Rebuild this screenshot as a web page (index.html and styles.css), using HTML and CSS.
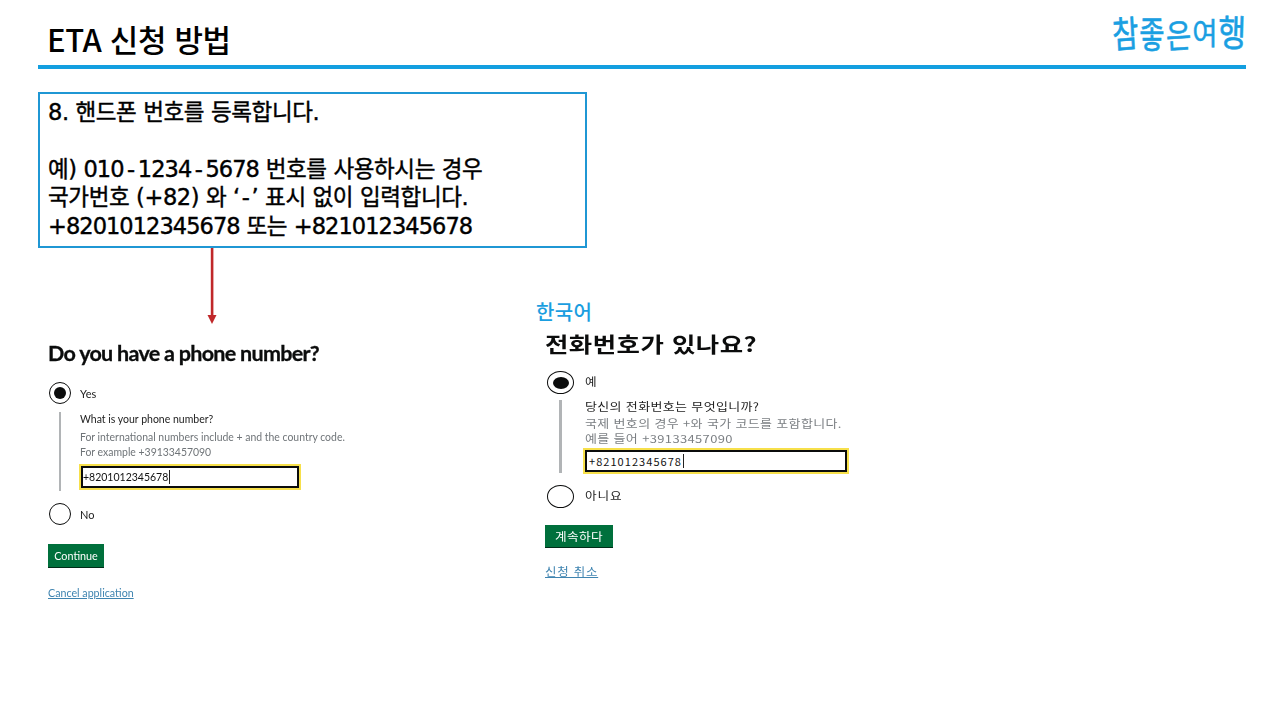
FILE: index.html
```html
<!DOCTYPE html>
<html lang="ko">
<head>
<meta charset="utf-8">
<title>ETA 신청 방법</title>
<link rel="stylesheet" href="styles.css">
</head>
<body>
<div class="slide">
  <header class="top">
    <h1 class="title">ETA 신청 방법</h1>
    <div class="logo"><span>참</span><span>좋</span><span>은</span><span>여</span><span>행</span></div>
  </header>
  <section class="note">
    <p>8. 핸드폰 번호를 등록합니다.</p>
    <p class="gap">예) <span class="num">010<span class="hy">-</span>1234<span class="hy">-</span>5678</span> 번호를 사용하시는 경우</p>
    <p>국가번호 (+82) 와 ‘<span class="hy2">-</span>’ 표시 없이 입력합니다.</p>
    <p><span class="num">+8201012345678</span> 또는 <span class="num">+821012345678</span></p>
  </section>
  <div class="cols">
    <div class="col-en">
      <svg class="arrow" width="12" height="76" viewBox="0 0 12 76"><rect x="4.8" y="0" width="2.6" height="68" fill="#c0282a"/><path d="M1.5 67H10.5L6 76Z" fill="#c0282a"/></svg>
      <form class="form en">
        <h2 class="q">Do you have a phone number?</h2>
        <div class="opt"><span class="radio on"></span><span>Yes</span></div>
        <div class="cond">
          <div class="ask">What is your phone number?</div>
          <div class="hint">For international numbers include + and the country code.</div>
          <div class="hint">For example +39133457090</div>
          <div class="field"><span class="val">+8201012345678</span></div>
        </div>
        <div class="opt no"><span class="radio"></span><span>No</span></div>
        <div class="btn">Continue</div>
        <a class="cancel" href="#">Cancel application</a>
      </form>
    </div>
    <div class="col-ko">
      <div class="lang">한국어</div>
      <form class="form ko">
        <h2 class="q">전화번호가 있나요?</h2>
        <div class="opt"><span class="radio on"></span><span class="wide">예</span></div>
        <div class="cond">
          <div class="ask">당신의 전화번호는 무엇입니까?</div>
          <div class="hint">국제 번호의 경우 +와 국가 코드를 포함합니다.</div>
          <div class="hint">예를 들어 +39133457090</div>
          <div class="field"><span class="val">+821012345678</span></div>
        </div>
        <div class="opt no"><span class="radio"></span><span class="wide">아니요</span></div>
        <div class="btn"><span class="wide">계속하다</span></div>
        <a class="cancel" href="#">신청 취소</a>
      </form>
    </div>
  </div>
</div>
</body>
</html>
```
FILE: styles.css
```css
* { box-sizing: border-box; }
html, body { margin: 0; padding: 0; background: #fff; }
body { font-family: "Noto Sans CJK KR", "Noto Sans", sans-serif; color: #000; }
.slide { width: 1280px; height: 720px; padding: 0 34px 0 38px; overflow: hidden; }

.top { height: 69px; display: flex; justify-content: space-between; align-items: flex-start; border-bottom: 4px solid #139fe0; padding: 0 0 0 9px; }
.title { margin: 18px 0 0; font-size: 31px; line-height: 42px; font-weight: 500; letter-spacing: -0.35px; }
.logo { width: 134px; height: 60px; margin-top: 12px; display: flex; font-size: 28px; line-height: 44px; font-weight: 400; color: #1a9fe2; white-space: nowrap; -webkit-text-stroke: 0.5px #1a9fe2; }
.logo span { display: block; width: 26.8px; transform-origin: center; }
.logo span:nth-child(1) { transform: translateX(1px) scale(1.02, 1.3) rotate(-4deg); }
.logo span:nth-child(2) { transform: translateY(1px) scale(0.98, 1.3); }
.logo span:nth-child(3) { transform: translateY(1px) scale(0.98, 1.2) rotate(-3deg); }
.logo span:nth-child(4) { transform: translateY(-2px) scale(0.98, 1.05); }
.logo span:nth-child(5) { transform: translateY(-1px) scale(1.08, 1.32) rotate(2deg); }

.note { width: 549px; height: 156px; margin-top: 23px; border: 2px solid #1f97d4; padding: 4px 0 0 8px; font-family: "DejaVu Sans", "Noto Sans CJK KR", sans-serif; font-size: 22.5px; line-height: 28.6px; font-weight: 400; letter-spacing: -0.38px; -webkit-text-stroke: 0.4px #000; }
.note p { margin: 0; white-space: nowrap; }
.note .gap { margin-top: 28px; }
.num { letter-spacing: -0.95px; }
.hy { padding: 0 3.5px; }
.hy2 { padding: 0 2px; }

.cols { display: flex; align-items: flex-start; }
.col-en { width: 498px; }
.arrow { display: block; margin-left: 168px; }
.col-ko { padding-top: 50px; }
.lang { font-size: 20px; line-height: 28px; font-weight: 500; color: #1b9ee0; letter-spacing: 0.3px; }

.form { display: flex; flex-direction: column; align-items: flex-start; filter: blur(0.25px); }
.form.en { margin: 16px 0 0 10px; font-family: "Lato", sans-serif; }
.form.ko { margin: 4px 0 0 9px; }
.q { margin: 0; font-size: 20.5px; line-height: 26px; font-weight: 700; color: #0b0c0c; white-space: nowrap; }
.en .q { font-size: 21.5px; letter-spacing: -0.7px; -webkit-text-stroke: 0.3px #0b0c0c; }
.ko .q { font-size: 21px; letter-spacing: 0.4px; transform: scaleX(1.21); transform-origin: left center; }
.wide { display: block; transform: scaleX(1.15); transform-origin: left center; }

.opt { display: flex; align-items: center; font-size: 11px; color: #222; }
.radio { display: flex; align-items: center; justify-content: center; border: 1.6px solid #0b0c0c; border-radius: 50%; background: #fff; flex: none; }
.radio.on::after { content: ""; display: block; background: #0b0c0c; border-radius: 50%; }

.en .opt { margin: 16px 0 0 1px; height: 22px; font-size: 11px; }
.en .radio { width: 22px; height: 22px; margin-right: 9px; }
.en .radio.on::after { width: 12px; height: 12px; }
.en .opt.no { margin-top: 12px; }

.ko .opt { margin: 15px 0 0 2px; height: 23px; letter-spacing: 0.8px; }
.ko .opt .wide { margin-bottom: 3px; }
.ko .radio { width: 27px; height: 23px; margin-right: 11px; }
.ko .radio.on::after { width: 16px; height: 12px; }
.ko .opt.no { margin-top: 12px; }

.cond { display: flex; flex-direction: column; align-items: flex-start; }
.en .cond { margin: 8px 0 0 11px; padding-left: 19px; height: 79px; width: 260px; border-left: 2.5px solid #b1b4b6; }
.ko .cond { margin: 6px 0 0 14px; padding-left: 23px; height: 73px; width: 300px; border-left: 3px solid #b1b4b6; }
.ask { line-height: 15px; color: #222; white-space: nowrap; }
.hint { line-height: 15px; color: #6f7478; white-space: nowrap; }
.en .ask { font-size: 10.5px; margin-bottom: 3px; }
.en .hint { font-size: 10.45px; }
.ko .ask, .ko .hint { font-size: 11px; letter-spacing: 0.3px; transform: scaleX(1.18); transform-origin: left center; }
.ko .ask { margin-top: -1px; margin-bottom: 2px; }
.ko .hint { color: #7b7f83; }

.field { background: #fff; border: 2.5px solid #0b0c0c; outline: 2px solid #f7e04b; display: flex; align-items: center; }
.en .field { width: 218px; height: 22px; margin-top: 6px; margin-left: 1px; padding-left: 0; }
.ko .field { width: 262px; height: 22px; margin-top: 4px; padding-left: 2px; }
.val { font-size: 10.5px; line-height: 14px; border-right: 1px solid #222; padding-right: 1px; color: #111; }
.ko .val { font-size: 11px; letter-spacing: 1.05px; }

.btn { background: #00703c; color: #fff; font-size: 11px; display: flex; align-items: center; justify-content: center; box-shadow: 0 1px 0 #002d18; }
.en .btn { width: 56px; height: 23px; margin-top: 19px; font-size: 10.8px; }
.ko .btn { width: 68px; height: 22px; margin-top: 17px; letter-spacing: 0.3px; padding-right: 6px; }

.cancel { color: #3f84b0; font-size: 11px; line-height: 16px; text-decoration: underline; }
.en .cancel { margin-top: 18px; font-size: 10.7px; }
.ko .cancel { margin-top: 16px; letter-spacing: 0.7px; transform: scaleX(1.13); transform-origin: left center; }
```
